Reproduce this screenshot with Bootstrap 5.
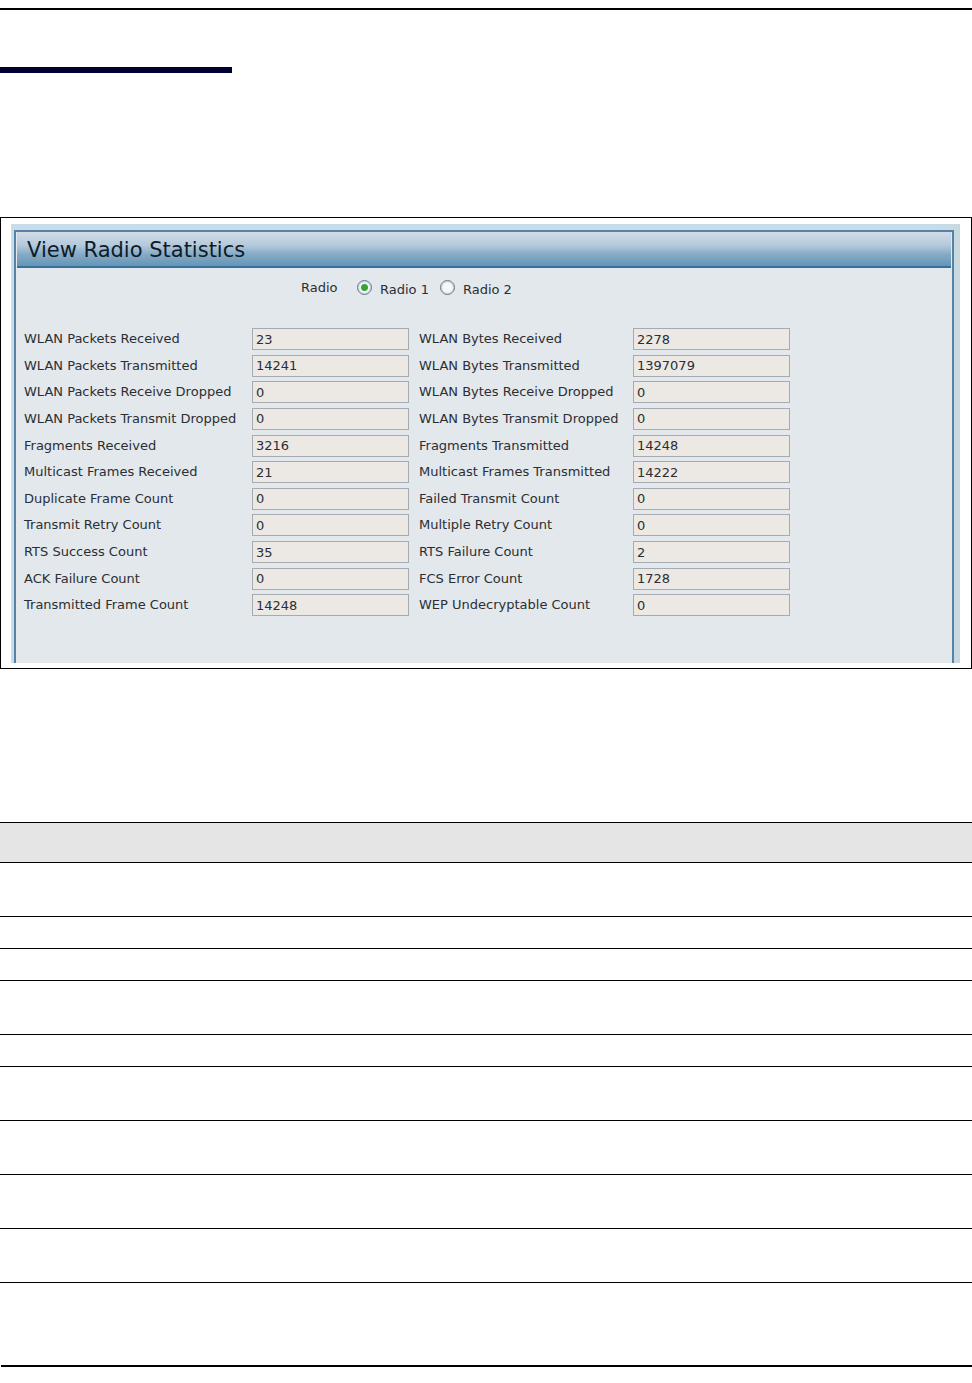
<!DOCTYPE html>
<html lang="en">
<head>
<meta charset="utf-8">
<meta name="viewport" content="width=device-width, initial-scale=1">
<title>View Radio Statistics</title>
<link href="https://cdn.jsdelivr.net/npm/bootstrap@5.3.0/dist/css/bootstrap.min.css" rel="stylesheet">
<style>
  body { font-family: "DejaVu Sans", Verdana, sans-serif; font-size: 13px; line-height: 20px; color: #2b2e33; background: #fff; }
  .page-rule { height: 2px; background: #000; }
  .accent-bar { width: 232px; height: 6px; margin-top: 57px; background: #000033; }
  .shot-frame { margin-top: 144px; border: 1px solid #000; padding: 6px 11px 5px 10px; }
  .shot { background: linear-gradient(90deg, #c9dce9, #c8dbe9 98%, #c8d9dd); padding: 6px 6px 0 3px; }
  .panel { border: 2px solid #5583a8; border-bottom: 0; background: #e3e8ec; padding: 0 1px; min-height: 433px; }
  .panel-title { height: 36px; font-size: 21px; line-height: 36px; color: #0f1c28; padding-left: 10px; border-bottom: 2px solid #33719e;
    background: linear-gradient(#d3dce6, #b3c9dc 40%, #86abc6 65%, #6495b6); }
  .radio-row { padding: 11px 0 0 284px; height: 40px; }
  .radio-row legend { width: 56px; font-size: 13px; line-height: 18px; }
  .radio-row label { line-height: 20px; padding: 1px 11px 0 8px; }
  .dot { appearance: none; width: 15px; height: 15px; border: 1px solid #5b7a96; border-radius: 50%; background: #f6f8f8; box-shadow: inset 0 0 1px 1px #c3ccd3; margin: 1px 0 0; }
  .dot:checked { background: radial-gradient(circle, #35a336 0 3px, #f3f8f3 4px); }
  .stats { grid-template-columns: 228px 157px 10px 214px 157px; grid-auto-rows: 1fr; min-height: 293px; margin-top: 20px; padding-left: 7px; }
  .stats label { line-height: 22px; white-space: nowrap; }
  .stats label.second { grid-column: 4; }
  .stats input { width: 100%; height: 22px; border: 1px solid #a6abb2; background: #ece9e5; color: #2b2e33; padding: 0 3px; font-size: 13px; border-radius: 0; }
  .doc-table { margin: 153px 0 0; border-collapse: collapse; }
  .doc-table tr { border-top: 1px solid #000; border-bottom: 1px solid #000; height: 54px; }
  .doc-table tr.short { height: 32px; }
  .doc-table thead tr { height: 40px; background: #e5e5e5; }
  .doc-table th, .doc-table td { padding: 0; }
  .foot-rule { margin: 82px 0 0 1px; }
</style>
</head>
<body>
<header class="pt-2">
  <div class="page-rule"></div>
  <div class="accent-bar"></div>
</header>
<main>
  <div class="shot-frame">
    <div class="shot">
      <form class="panel">
        <h1 class="panel-title m-0 fw-normal">View Radio Statistics</h1>
        <fieldset class="radio-row">
          <div class="d-flex align-items-start">
            <legend class="m-0 float-none">Radio</legend>
            <input class="dot" type="radio" name="radio" id="r1" checked><label for="r1">Radio 1</label>
            <input class="dot" type="radio" name="radio" id="r2"><label for="r2">Radio 2</label>
          </div>
        </fieldset>
        <div class="stats d-grid align-items-start">
          <label for="a1">WLAN Packets Received</label><input id="a1" value="23" readonly>
          <label class="second" for="b1">WLAN Bytes Received</label><input id="b1" value="2278" readonly>
          <label for="a2">WLAN Packets Transmitted</label><input id="a2" value="14241" readonly>
          <label class="second" for="b2">WLAN Bytes Transmitted</label><input id="b2" value="1397079" readonly>
          <label for="a3">WLAN Packets Receive Dropped</label><input id="a3" value="0" readonly>
          <label class="second" for="b3">WLAN Bytes Receive Dropped</label><input id="b3" value="0" readonly>
          <label for="a4">WLAN Packets Transmit Dropped</label><input id="a4" value="0" readonly>
          <label class="second" for="b4">WLAN Bytes Transmit Dropped</label><input id="b4" value="0" readonly>
          <label for="a5">Fragments Received</label><input id="a5" value="3216" readonly>
          <label class="second" for="b5">Fragments Transmitted</label><input id="b5" value="14248" readonly>
          <label for="a6">Multicast Frames Received</label><input id="a6" value="21" readonly>
          <label class="second" for="b6">Multicast Frames Transmitted</label><input id="b6" value="14222" readonly>
          <label for="a7">Duplicate Frame Count</label><input id="a7" value="0" readonly>
          <label class="second" for="b7">Failed Transmit Count</label><input id="b7" value="0" readonly>
          <label for="a8">Transmit Retry Count</label><input id="a8" value="0" readonly>
          <label class="second" for="b8">Multiple Retry Count</label><input id="b8" value="0" readonly>
          <label for="a9">RTS Success Count</label><input id="a9" value="35" readonly>
          <label class="second" for="b9">RTS Failure Count</label><input id="b9" value="2" readonly>
          <label for="a10">ACK Failure Count</label><input id="a10" value="0" readonly>
          <label class="second" for="b10">FCS Error Count</label><input id="b10" value="1728" readonly>
          <label for="a11">Transmitted Frame Count</label><input id="a11" value="14248" readonly>
          <label class="second" for="b11">WEP Undecryptable Count</label><input id="b11" value="0" readonly>
        </div>
      </form>
    </div>
  </div>
  <table class="doc-table w-100">
    <thead><tr><th></th></tr></thead>
    <tbody>
      <tr><td></td></tr>
      <tr class="short"><td></td></tr>
      <tr class="short"><td></td></tr>
      <tr><td></td></tr>
      <tr class="short"><td></td></tr>
      <tr><td></td></tr>
      <tr><td></td></tr>
      <tr><td></td></tr>
      <tr><td></td></tr>
    </tbody>
  </table>
</main>
<footer><div class="page-rule foot-rule"></div></footer>
<script src="https://cdn.jsdelivr.net/npm/bootstrap@5.3.0/dist/js/bootstrap.bundle.min.js"></script>
</body>
</html>
